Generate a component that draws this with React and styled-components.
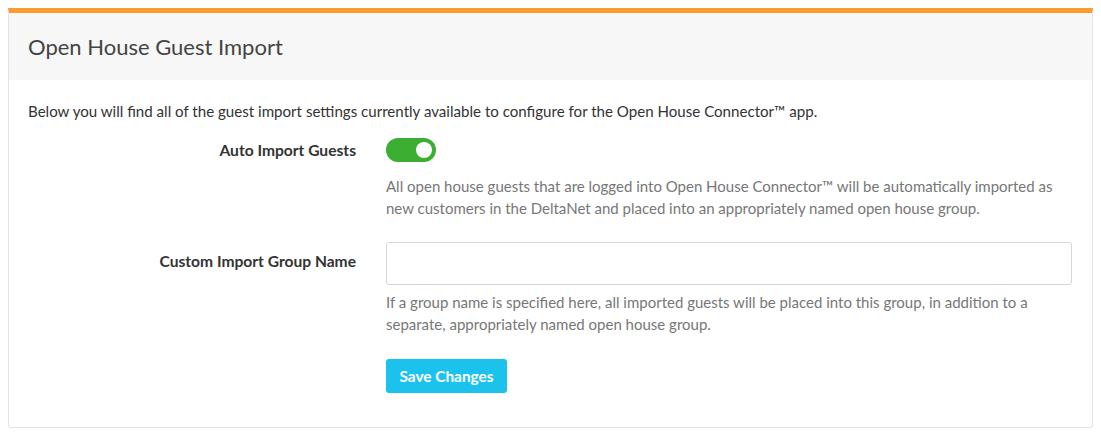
import React, { useState } from 'react'
import styled, { createGlobalStyle } from 'styled-components'

const GlobalStyle = createGlobalStyle`
  body {
    margin: 8px;
    background: #ffffff;
    font-family: Lato, "Open Sans", sans-serif;
    color: #333;
  }
  * { box-sizing: border-box; }
`;

const Card = styled.div`
  width: 1085px;
  height: 420px;
  border: 1px solid #e3e3e3;
  border-top: 5px solid #f99d33;
  border-radius: 0 0 3px 3px;
  background: #fff;
`;

const CardHeader = styled.div`
  background: #f7f7f7;
  height: 67px;
  display: flex;
  align-items: center;
  padding: 0 20px 0 19px;
`;

const Title = styled.h2`
  margin: 0;
  font-size: 22px;
  font-weight: 400;
  color: #444;
`;

const CardBody = styled.div`
  padding: 20px 20px 0 19px;
`;

const Intro = styled.p`
  margin: 0 0 10px;
  font-size: 15.1px;
  line-height: 22px;
  color: #333;
`;

const FormRow = styled.div`
  display: grid;
  grid-template-columns: 328px 1fr;
  column-gap: 30px;
  margin-bottom: ${({ $gap }) => $gap || 0}px;
`;

const Label = styled.label`
  text-align: right;
  font-weight: 700;
  font-size: 15.6px;
  line-height: 22px;
  color: #333;
  padding-top: ${({ $top }) => $top || 0}px;
`;

const Control = styled.div`
  display: flex;
  flex-direction: column;
  align-items: flex-start;
`;

const Switch = styled.button`
  width: 50px;
  height: 24px;
  border: none;
  border-radius: 12px;
  padding: 0;
  background: ${({ $on }) => ($on ? '#3caf33' : '#ccc')};
  position: relative;
  cursor: pointer;
  margin-top: 6px;
  &::after {
    content: '';
    position: absolute;
    top: 4px;
    left: ${({ $on }) => ($on ? '30px' : '4px')};
    width: 16px;
    height: 16px;
    border-radius: 50%;
    background: #fff;
  }
`;

const Help = styled.p`
  margin: ${({ $top }) => $top}px 0 0;
  font-size: 15px;
  line-height: 22px;
  color: #777;
`;

const TextInput = styled.input`
  width: 686px;
  height: 43px;
  border: 1px solid #d6d6d6;
  border-radius: 3px;
  padding: 6px 12px;
  font-size: 15px;
  font-family: inherit;
  outline: none;
`;

const SaveButton = styled.button`
  height: 34px;
  width: 121px;
  border: none;
  border-radius: 3px;
  background: #1cc2ee;
  color: #fff;
  font-family: inherit;
  font-weight: 700;
  font-size: 15.4px;
  cursor: pointer;
`;

export default function App() {
  const [autoImport, setAutoImport] = useState(true)
  const [groupName, setGroupName] = useState('')
  return (
    <>
      <GlobalStyle />
      <Card>
        <CardHeader>
          <Title>Open House Guest Import</Title>
        </CardHeader>
        <CardBody>
          <Intro>
            Below you will find all of the guest import settings currently available to configure for the Open House Connector™ app.
          </Intro>
          <FormRow $gap={23}>
            <Label $top={7}>Auto Import Guests</Label>
            <Control>
              <Switch $on={autoImport} onClick={() => setAutoImport(!autoImport)} />
              <Help $top={13}>
                All open house guests that are logged into Open House Connector™ will be automatically imported as new customers in the DeltaNet and placed into an appropriately named open house group.
              </Help>
            </Control>
          </FormRow>
          <FormRow $gap={24}>
            <Label $top={8}>Custom Import Group Name</Label>
            <Control>
              <TextInput value={groupName} onChange={(e) => setGroupName(e.target.value)} />
              <Help $top={6}>
                If a group name is specified here, all imported guests will be placed into this group, in addition to a separate, appropriately named open house group.
              </Help>
            </Control>
          </FormRow>
          <FormRow>
            <span />
            <Control>
              <SaveButton>Save Changes</SaveButton>
            </Control>
          </FormRow>
        </CardBody>
      </Card>
    </>
  )
}
